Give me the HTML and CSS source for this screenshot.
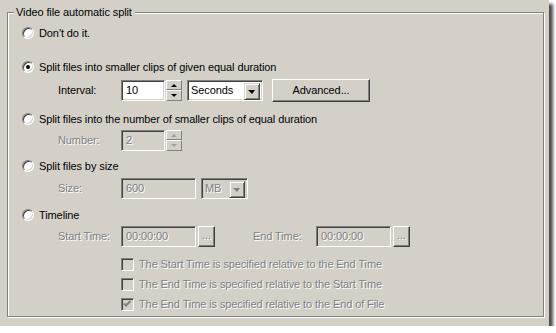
FILE: index.html
```html
<!DOCTYPE html>
<html lang="en">
<head>
    <meta charset="UTF-8">
    <title>Video file automatic split</title>
    <link rel="stylesheet" href="styles.css">
</head>
<body>
    <div class="window">
        <div class="group">
            <span class="legend">Video file automatic split</span>

            <div class="opt r1"><span class="radio"></span>Don't do it.</div>

            <div class="opt r2"><span class="radio on"></span>Split files into smaller clips of given equal duration</div>
            <div class="ctl c2">
                <span class="lbl">Interval:</span>
                <span class="edit w44">10</span>
                <span class="spin"><span class="up"></span><span class="dn"></span></span>
                <span class="combo w76">Seconds<span class="arrow"></span></span>
                <span class="btn adv">Advanced...</span>
            </div>

            <div class="opt r3"><span class="radio"></span>Split files into the number of smaller clips of equal duration</div>
            <div class="ctl c3 off">
                <span class="lbl">Number:</span>
                <span class="edit w44">2</span>
                <span class="spin"><span class="up"></span><span class="dn"></span></span>
            </div>

            <div class="opt r4"><span class="radio"></span>Split files by size</div>
            <div class="ctl c4 off">
                <span class="lbl">Size:</span>
                <span class="edit w75">600</span>
                <span class="combo w47">MB<span class="arrow"></span></span>
            </div>

            <div class="opt r5"><span class="radio"></span>Timeline</div>
            <div class="ctl c5 off">
                <span class="lbl">Start Time:</span>
                <span class="edit w75">00:00:00</span>
                <span class="btn dots">...</span>
                <span class="lbl lbl2">End Time:</span>
                <span class="edit w75">00:00:00</span>
                <span class="btn dots">...</span>
            </div>

            <div class="chk k1 off"><span class="box"></span>The Start Time is specified relative to the End Time</div>
            <div class="chk k2 off"><span class="box"></span>The End Time is specified relative to the Start Time</div>
            <div class="chk k3 off">
                <span class="box"><svg width="11" height="11" viewBox="0 0 11 11"><path d="M2 4.5 L4 6.5 L8.5 2" fill="none" stroke="#808080" stroke-width="2"/></svg></span>The End Time is specified relative to the End of File
            </div>
        </div>
    </div>
</body>
</html>
```
FILE: styles.css
```css
*{margin: 0; padding: 0; box-sizing: border-box;}
body{
    background: #fff;
    font-family: "Liberation Sans", Arial, sans-serif;
    font-size: 11px;
    letter-spacing: -0.1px;
    color: #000;
}
.window{
    width: 549px;
    height: 326px;
    background: #d4d0c8;
    box-shadow: 4px 4px 3px rgba(0, 0, 0, 0.7);
    padding: 12px 0 0 7px;
}
/* etched group frame */
.group{
    position: relative;
    width: 537px;
    height: 305px;
    border: 1px solid #808080;
    box-shadow: 1px 1px 0 #fff, inset 1px 1px 0 #fff;
    padding: 11px 0 0 14px;
}
.legend{
    position: absolute;
    left: 6px;
    top: -8px;
    padding: 0 3px 0 2px;
    background: #d4d0c8;
    line-height: 14px;
}
.opt, .chk{
    display: flex;
    align-items: center;
    height: 18px;
}
.radio{
    position: relative;
    width: 12px;
    height: 12px;
    margin-right: 5px;
    border-radius: 50%;
    border: 1px solid;
    border-color: #808080 #fff #fff #808080;
    background: #fff;
    box-shadow: inset 1px 1px 0 #404040, inset -1px -1px 0 #d4d0c8;
}
.radio.on::after{
    content: "";
    position: absolute;
    left: 3px;
    top: 3px;
    width: 4px;
    height: 4px;
    border-radius: 50%;
    background: #000;
}
.r2{margin-top: 16px;}
.r3{margin-top: 9px;}
.r4{margin-top: 6px;}
.r5{margin-top: 7px;}

.ctl{
    display: flex;
    align-items: center;
    height: 22px;
    padding-left: 36px;
}
.c2{margin-top: 3px;}
.c3{margin-top: 1px;}
.c4{margin-top: 2px;}
.c5{margin-top: 1px;}
.lbl{width: 63px;}
.lbl2{width: 63px; margin-left: 38px;}

.edit{
    display: flex;
    align-items: center;
    height: 21px;
    padding-left: 4px;
    background: #fff;
    border: 1px solid;
    border-color: #808080 #fff #fff #808080;
    box-shadow: inset 1px 1px 0 #404040, inset -1px -1px 0 #d4d0c8;
}
.w44{width: 44px;}
.w75{width: 75px;}
.w76{width: 76px;}
.w47{width: 47px;}

.spin{
    display: flex;
    flex-direction: column;
    width: 16px;
    height: 21px;
    margin-left: 1px;
}
.spin span{
    position: relative;
    flex: 1;
    background: #d4d0c8;
    border: 1px solid;
    border-color: #fff #808080 #808080 #fff;
}
.spin span::after{
    content: "";
    position: absolute;
    left: 4px;
    top: 3px;
    border-left: 3px solid transparent;
    border-right: 3px solid transparent;
}
.spin .up::after{border-bottom: 3px solid #000;}
.spin .dn::after{border-top: 3px solid #000;}

.combo{
    position: relative;
    display: flex;
    align-items: center;
    height: 21px;
    margin-left: 5px;
    padding-left: 3px;
    background: #fff;
    border: 1px solid;
    border-color: #808080 #fff #fff #808080;
    box-shadow: inset 1px 1px 0 #404040, inset -1px -1px 0 #d4d0c8;
}
.arrow{
    position: absolute;
    right: 2px;
    top: 2px;
    width: 16px;
    height: 17px;
    background: #d4d0c8;
    border: 1px solid;
    border-color: #d4d0c8 #404040 #404040 #d4d0c8;
    box-shadow: inset 1px 1px 0 #fff, inset -1px -1px 0 #808080;
}
.arrow::after{
    content: "";
    position: absolute;
    left: 3px;
    top: 6px;
    border-left: 4px solid transparent;
    border-right: 3px solid transparent;
    border-top: 4px solid #000;
}

.btn{
    display: flex;
    align-items: center;
    justify-content: center;
    background: #d4d0c8;
    border: 1px solid;
    border-color: #fff #404040 #404040 #fff;
    box-shadow: inset -1px -1px 0 #808080;
}
.adv{
    width: 98px;
    height: 23px;
    margin-left: 9px;
}
.dots{
    width: 17px;
    height: 21px;
    margin-left: 2px;
    padding-bottom: 2px;
}

/* disabled look */
.off{
    color: #808080;
    text-shadow: 1px 1px 0 #fff;
}
.off .edit, .off .combo{background: #d4d0c8;}
.off .spin .up::after{border-bottom-color: #a0a0a0;}
.off .spin .dn::after{border-top-color: #a0a0a0;}
.off .arrow::after{border-top-color: #808080;}

.chk{padding-left: 99px;}
.k1{margin-top: 8px;}
.k2, .k3{margin-top: 2px;}
.box{
    display: flex;
    align-items: center;
    justify-content: center;
    width: 13px;
    height: 13px;
    margin-right: 5px;
    background: #d4d0c8;
    border: 1px solid;
    border-color: #808080 #fff #fff #808080;
    box-shadow: inset 1px 1px 0 #404040, inset -1px -1px 0 #d4d0c8;
}
```
